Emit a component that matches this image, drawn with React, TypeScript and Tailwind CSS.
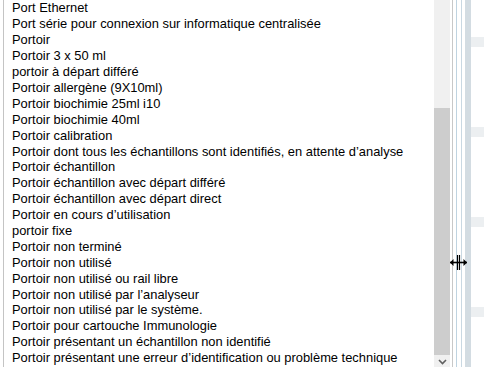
import React from 'react'

const items = [
  'Port Ethernet',
  'Port série pour connexion sur informatique centralisée',
  'Portoir',
  'Portoir 3 x 50 ml',
  'portoir à départ différé',
  'Portoir allergène (9X10ml)',
  'Portoir biochimie 25ml i10',
  'Portoir biochimie 40ml',
  'Portoir calibration',
  'Portoir dont tous les échantillons sont identifiés, en attente d’analyse',
  'Portoir échantillon',
  'Portoir échantillon avec départ différé',
  'Portoir échantillon avec départ direct',
  'Portoir en cours d’utilisation',
  'portoir fixe',
  'Portoir non terminé',
  'Portoir non utilisé',
  'Portoir non utilisé ou rail libre',
  'Portoir non utilisé par l’analyseur',
  'Portoir non utilisé par le système.',
  'Portoir pour cartouche Immunologie',
  'Portoir présentant un échantillon non identifié',
  'Portoir présentant une erreur d’identification ou problème technique',
]

// right hand panel: light bands roughly every 90px
const bands = [37, 127, 218, 308]

export default function App() {
  return (
    <div className="relative flex h-[367px] w-[484px] overflow-hidden bg-white font-['Liberation_Sans',Arial,sans-serif] text-black">
      {/* left frame edge */}
      <div className="w-[3px] shrink-0 bg-white" />
      <div className="w-px shrink-0 bg-[#c4c4c4]" />

      {/* list */}
      <div className="w-[430px] shrink-0 overflow-hidden pl-2 pt-px">
        {items.map((t) => (
          <div key={t} className="flex h-[15.9px] items-center whitespace-nowrap text-[12.9px] leading-none">
            {t}
          </div>
        ))}
      </div>

      {/* scrollbar */}
      <div className="flex w-[16px] shrink-0 flex-col bg-[#f0f0f0]">
        <div className="h-[108px]" />
        <div className="h-[247px] bg-[#cdcdcd]" />
        <div className="flex flex-1 items-start justify-center pt-[4px]">
          <svg width="9" height="6" viewBox="0 0 9 6">
            <path d="M1 1 L4.5 4.5 L8 1" fill="none" stroke="#606060" strokeWidth="1.6" />
          </svg>
        </div>
      </div>

      {/* splitter lines */}
      <div className="w-[2px] shrink-0 bg-white" />
      <div className="w-px shrink-0 bg-[#c8c8c8]" />
      <div className="w-[3px] shrink-0 bg-white" />
      <div className="w-px shrink-0 bg-[#bfd3e0]" />
      <div className="w-[4px] shrink-0 bg-white" />
      <div className="w-px shrink-0 bg-[#c9d8e2]" />
      <div className="w-[3px] shrink-0 bg-white" />
      <div className="w-[6px] shrink-0 bg-[#d3dce2]" />

      {/* right panel */}
      <div className="flex flex-1 flex-col bg-white">
        {bands.map((y, i) => (
          <React.Fragment key={y}>
            <div className={i === 0 ? 'h-[37px]' : 'h-[80px]'} />
            <div className="h-[10px] bg-[#eceff1]" />
          </React.Fragment>
        ))}
      </div>

      {/* mouse cursor over the splitter */}
      <svg className="absolute left-[449px] top-[254px]" width="19" height="17" viewBox="0 0 19 17">
        <path d="M8.5 1 V16 M10.5 1 V16" stroke="#000" strokeWidth="1.2" />
        <path d="M1 8.5 H18" stroke="#000" strokeWidth="1.6" />
        <path d="M1 8.5 L4.5 5 V12 Z M18 8.5 L14.5 5 V12 Z" fill="#000" />
      </svg>
    </div>
  )
}
